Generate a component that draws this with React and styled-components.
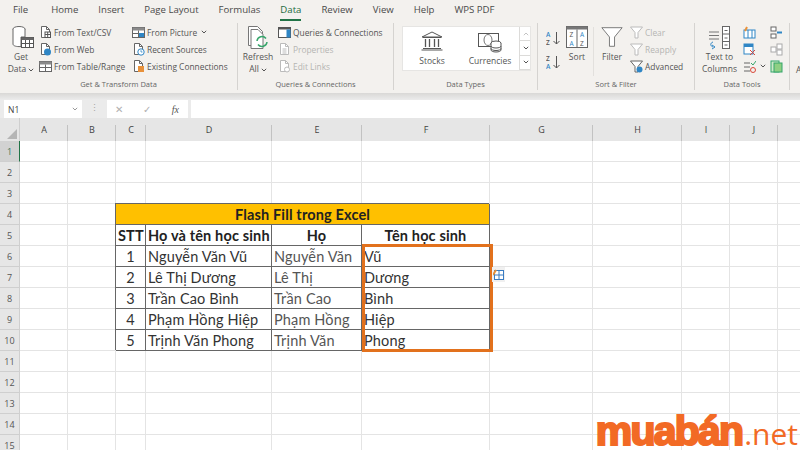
import React from "react";
import styled, { createGlobalStyle } from "styled-components";

const GlobalStyle = createGlobalStyle`
    html, body { margin: 0; padding: 0; background: #fff; }
    body { font-family: "Open Sans", "Noto Sans", sans-serif; }
`;

const Page = styled.div`
    width: 800px;
    height: 450px;
    overflow: hidden;
    position: relative;
    background: #fff;
`;

/* ---------- tabs + ribbon ---------- */

const TabBar = styled.div`
    height: 21px;
    display: flex;
    gap: 20px;
    padding-left: 13px;
    background: #f3f1ee;
`;

const Tab = styled.div`
    height: 19px;
    line-height: 20px;
    font-size: 9.6px;
    color: #4a4a4a;
    white-space: nowrap;
    &:first-child { margin-right: 3px; }
    ${p => p.$active && `
        color: #1d6b40;
        border-bottom: 2px solid #217346;
    `}
`;

const Ribbon = styled.div`
    height: 72px;
    display: flex;
    background: #f3f1ee;
`;

const ShadowStrip = styled.div`
    height: 7px;
    background: linear-gradient(#d9d8d6, #ececec);
`;

const Group = styled.div`
    width: ${p => p.$width}px;
    box-sizing: border-box;
    flex: none;
    display: flex;
    flex-direction: column;
    align-items: stretch;
    margin: 2px 0 3px;
    border-right: 1px solid #d5d3d0;
`;

const GroupBody = styled.div`
    flex: 1;
    display: flex;
    padding-left: ${p => p.$pad || 0}px;
    gap: ${p => p.$gap || 0}px;
`;

const GroupLabel = styled.div`
    height: 12px;
    line-height: 12px;
    text-align: center;
    font-size: 7.5px;
    color: #666;
    white-space: nowrap;
`;

const BigButton = styled.div`
    width: ${p => p.$width}px;
    flex: none;
    display: flex;
    flex-direction: column;
    align-items: center;
    padding-top: ${p => p.$top ?? 0}px;
    text-align: center;
    font-size: 8.5px;
    line-height: 12px;
    color: #555;
    white-space: nowrap;
    & > svg { display: block; margin-bottom: ${p => p.$iconGap ?? 2}px; }
`;

const SmallColumn = styled.div`
    display: flex;
    flex-direction: column;
    padding-top: ${p => p.$top ?? 1}px;
    gap: ${p => p.$gap ?? 1}px;
    width: ${p => (p.$width ? p.$width + "px" : "auto")};
    margin-left: ${p => p.$left ?? 0}px;
    flex: none;
`;

const SmallButton = styled.div`
    height: 16px;
    display: flex;
    align-items: center;
    gap: 2px;
    font-size: 8.4px;
    color: ${p => (p.$off ? "#b5b5b3" : "#555")};
    white-space: nowrap;
    svg { flex: none; display: block; }
`;

const InnerDivider = styled.div`
    width: 1px;
    flex: none;
    margin: 4px 0 2px;
    background: #e2e0dd;
`;

const Gallery = styled.div`
    width: 129px;
    height: 45px;
    margin: 3px 0 0 8px;
    display: flex;
    background: #fff;
    border: 1px solid #e6e5e3;
    box-sizing: border-box;
`;

const GalleryItem = styled(BigButton)`
    width: 58px;
    padding-top: 4px;
    font-size: 8.5px;
`;

const GalleryArrows = styled.div`
    margin-left: auto;
    width: 11px;
    display: flex;
    flex-direction: column;
    border-left: 1px solid #dcdbd9;
`;

const GalleryArrow = styled.div`
    flex: 1;
    display: flex;
    align-items: center;
    justify-content: center;
    border-bottom: 1px solid #dcdbd9;
`;

const CutOffLabel = styled.div`
    padding: 43px 0 0 6px;
    font-size: 8.5px;
    line-height: 12px;
    color: #555;
`;

const Chevron = ({ up, color = "#555" }) => (
    <svg width="6" height="4" viewBox="0 0 6 4" style={{ display: "inline-block", marginLeft: 2 }}>
        <path d={up ? "M.8 3.200 3 1l2.200 2.200" : "M.8.8 3 3 5.200.8"} fill="none" stroke={color} />
    </svg>
);

/* ---------- icons ---------- */

const Doc = ({ kind, off }) => {
    const line = off ? "#bbb" : "#666";
    return (
        <svg width="13" height="14" viewBox="0 0 13 14">
            <path d="M2.500 1.500h5l3 3v8h-8z" fill="#fff" stroke={line} />
            <path d="M7.500 1.500v3h3" fill="none" stroke={line} />
            {kind === "text" && <rect x="6" y="7" width="5.500" height="5.500" fill="#fff" stroke="#555" />}
            {kind === "text" && <path d="M6 9.500h5.500M8.700 7v5.500" stroke="#555" />}
            {kind === "web" && <circle cx="8.500" cy="10" r="3.500" fill="#2f86c5" />}
            {kind === "recent" && <circle cx="9" cy="10" r="3.200" fill="#fff" stroke="#2f86c5" />}
            {kind === "recent" && <path d="M9 8.200V10h1.500" fill="none" stroke="#2f86c5" strokeWidth=".8" />}
            {kind === "existing" && <rect x="6" y="7" width="6" height="6" fill="#e8913a" />}
            {kind === "props" && <path d="M4.500 7h4M4.500 9h4M4.500 11h4" stroke={line} />}
            {kind === "links" && <circle cx="9" cy="10.500" r="2.500" fill="#fff" stroke={line} />}
        </svg>
    );
};

const TableMini = ({ blue }) => (
    <svg width="13" height="13" viewBox="0 0 13 13">
        <rect x=".5" y="1.500" width="12" height="10" fill="#fff" stroke="#666" />
        <rect x=".5" y="1.500" width="12" height="3" fill="#8a8a8a" />
        <path d="M.5 7.500h12M6.500 4.500v7" stroke="#666" />
        {blue && <rect x="7" y="7" width="5" height="4" fill="#2f86c5" />}
    </svg>
);

const GetDataIcon = () => (
    <svg width="26" height="26" viewBox="0 0 26 26">
        <ellipse cx="11" cy="4" rx="6" ry="2.500" fill="#fff" stroke="#666" />
        <path d="M5 4v15c0 1.600 2.500 2.600 6 2.600h2V12h4V4" fill="#fff" stroke="#666" />
        <rect x="13.500" y="12.500" width="12" height="10" fill="#fff" stroke="#555" />
        <rect x="13.500" y="12.500" width="12" height="2.500" fill="#666" />
        <path d="M13.500 18.500h12M17.500 15v7.500M21.500 15v7.500" stroke="#555" />
    </svg>
);

const RefreshIcon = () => (
    <svg width="24" height="26" viewBox="0 0 24 26">
        <path d="M2.500 1.500h9l5 5v14h-14z" fill="#fff" stroke="#777" />
        <path d="M5 4.500h7l5 5v14H5z" fill="#fff" stroke="#777" />
        <path d="M11 16a5 5 0 0 1 9-2.500M21 17a5 5 0 0 1-9 2.500" fill="none" stroke="#35a56a" strokeWidth="1.500" />
    </svg>
);

const QueriesIcon = () => (
    <svg width="13" height="13" viewBox="0 0 13 13">
        <rect x=".5" y="1.500" width="12" height="10" fill="#fff" stroke="#555" />
        <rect x=".5" y="1.500" width="12" height="2" fill="#555" />
        <rect x="8.500" y="3.500" width="4" height="8" fill="#2f86c5" />
    </svg>
);

const BankIcon = () => (
    <svg width="24" height="20" viewBox="0 0 24 20">
        <path d="M12 1 2 6h20z" fill="none" stroke="#555" />
        <path d="M3 6.500h18M3 17.500h18M1.500 19h21" stroke="#555" />
        <path d="M5.500 8v8M9.500 8v8M14.500 8v8M18.500 8v8" stroke="#555" strokeWidth="1.300" />
    </svg>
);

const MoneyIcon = () => (
    <svg width="26" height="22" viewBox="0 0 26 22">
        <rect x="1.500" y="2.500" width="20" height="13" fill="#fff" stroke="#555" />
        <ellipse cx="11" cy="9" rx="4" ry="5.500" fill="none" stroke="#777" />
        <ellipse cx="19" cy="12" rx="5" ry="2" fill="#fff" stroke="#555" />
        <path d="M14 12v7c0 1 2 2 5 2s5-1 5-2v-7M14 15c0 1 2 2 5 2s5-1 5-2M14 17.500c0 1 2 2 5 2s5-1 5-2" fill="#fff" stroke="#555" />
    </svg>
);

const SortAsc = ({ flip }) => (
    <svg width="15" height="15" viewBox="0 0 15 15">
        <text x="0" y="6" fontSize="6.500" fontWeight="600" fontFamily="Open Sans" fill={flip ? "#555" : "#2f86c5"}>{flip ? "Z" : "A"}</text>
        <text x="0" y="14" fontSize="6.500" fontWeight="600" fontFamily="Open Sans" fill={flip ? "#2f86c5" : "#555"}>{flip ? "A" : "Z"}</text>
        <path d="M10.500 1v12M7.500 10l3 3 3-3" fill="none" stroke="#555" />
    </svg>
);

const SortIcon = () => (
    <svg width="22" height="22" viewBox="0 0 22 22">
        <rect x=".5" y=".5" width="21" height="21" fill="#fff" stroke="#666" />
        <rect x=".5" y=".5" width="21" height="3" fill="#777" />
        <path d="M11 3.500v18" stroke="#666" />
        <text x="3.500" y="11" fontSize="6.500" fontFamily="Open Sans" fill="#555">Z</text>
        <text x="3.500" y="20" fontSize="6.500" fontFamily="Open Sans" fill="#2f86c5">A</text>
        <text x="14" y="11" fontSize="6.500" fontFamily="Open Sans" fill="#2f86c5">A</text>
        <text x="14" y="20" fontSize="6.500" fontFamily="Open Sans" fill="#555">Z</text>
    </svg>
);

const Funnel = ({ size = 13, color = "#666", badge }) => (
    <svg width={size} height={size} viewBox="0 0 13 13">
        <path d="M.5 1h12L8 6.500V12L5 12V6.500z" fill="#fff" stroke={color} strokeWidth={size > 20 ? 0.5 : 1} />
        {badge && <circle cx="9.500" cy="9.500" r="3" fill={badge} />}
    </svg>
);

const TextToColumnsIcon = () => (
    <svg width="26" height="24" viewBox="0 0 26 24">
        <path d="M2 6h10M2 9.500h10M2 13h10" stroke="#777" />
        <rect x="15.500" y=".5" width="7" height="22" fill="#fff" stroke="#666" />
        <path d="M15.500 8h7M15.500 15.500h7M17.500 4.500h3M17.500 12h3M17.500 19h3" stroke="#666" />
        <path d="M6 16c-3 1-3 4 0 5M5 23l3-2-3-2" fill="none" stroke="#2f86c5" />
    </svg>
);

const Tool = ({ children }) => (
    <svg width="13" height="13" viewBox="0 0 13 13">{children}</svg>
);

/* ---------- formula bar ---------- */

const FormulaBar = styled.div`
    height: 18px;
    display: flex;
    align-items: stretch;
    background: #ebebeb;
    padding-left: 4px;
`;

const NameBox = styled.div`
    width: 70px;
    padding: 0 4px;
    display: flex;
    align-items: center;
    justify-content: space-between;
    background: #fff;
    font-size: 8.500px;
    color: #444;
`;

const Dots = styled.div`
    width: 25px;
    text-align: center;
    line-height: 16px;
    font-size: 9px;
    color: #a5a5a5;
`;

const FxBox = styled.div`
    width: 81px;
    display: flex;
    align-items: center;
    justify-content: space-between;
    padding: 0 9px 0 8px;
    box-sizing: border-box;
    background: #fff;
    color: #b0b0b0;
    font-size: 10px;
`;

const FxMark = styled.span`
    font-family: "Liberation Serif", serif;
    font-style: italic;
    color: #555;
`;

const FormulaInput = styled.div`
    flex: 1;
    margin-left: 3px;
    background: #fff;
`;

/* ---------- sheet ---------- */

const Sheet = styled.div`
    position: relative;
    display: grid;
    grid-template-columns: 20px 48px 48px 30px 126px 90px 128px 103px 89px 48px 48px 60px;
    grid-auto-rows: 21px;
    grid-template-rows: 23px;
`;

const Corner = styled.div`
    background: #e6e6e6;
    border-right: 1px solid #cfcfcf;
    position: relative;
    &::after {
        content: "";
        position: absolute;
        right: 2px;
        bottom: 2px;
        border-style: solid;
        border-width: 0 0 10px 10px;
        border-color: transparent transparent #b5b5b5 transparent;
    }
`;

const ColHead = styled.div`
    background: linear-gradient(#c2c2c2, #c2c2c2) right bottom / 1px 16px no-repeat, #e6e6e6;
    display: flex;
    align-items: center;
    justify-content: center;
    font-size: 9px;
    color: #444;
`;

const RowHead = styled.div`
    display: flex;
    align-items: center;
    justify-content: center;
    padding-top: 1px;
    box-sizing: border-box;
    background: ${p => (p.$active ? "#d2d2d2" : "#e6e6e6")};
    border-bottom: 1px solid #cfcfcf;
    border-right: ${p => (p.$active ? "1px solid #217346" : "1px solid #cfcfcf")};
    font-size: 9px;
    color: ${p => (p.$active ? "#3d7a5c" : "#555")};
`;

const Cell = styled.div`
    box-sizing: border-box;
    min-width: 0;
    border-right: 1px solid #e4e4e4;
    border-bottom: 1px solid #e4e4e4;
    padding: 0 2px;
    line-height: 21px;
    white-space: nowrap;
    font-family: Lato, "Liberation Sans", sans-serif;
    font-size: 14.500px;
    letter-spacing: 0.15px;
    color: ${p => p.$color || "#333"};
    text-align: ${p => p.$align || "left"};
    font-weight: ${p => (p.$bold ? 700 : 400)};
    ${p => p.$table && `
        border-color: #666;
        box-shadow: -1px -1px 0 #666;
    `}
    ${p => p.$fill && `background: ${p.$fill};`}
`;

const TitleCell = styled(Cell)`
    grid-column: span 4;
`;

const Highlight = styled.div`
    position: absolute;
    left: 362px;
    top: 126px;
    width: 131px;
    height: 108px;
    box-sizing: border-box;
    border: 3px solid #e2711d;
    pointer-events: none;
`;

const FillOptions = styled.div`
    position: absolute;
    left: 492px;
    top: 149px;
    width: 13px;
    height: 15px;
    background: #f0f0f0;
    display: flex;
    align-items: center;
    justify-content: center;
`;

const Logo = styled.div`
    position: absolute;
    right: 2px;
    bottom: -4px;
    display: flex;
    align-items: baseline;
    color: #f26a25;
    line-height: 40px;
    white-space: nowrap;
`;

const LogoMain = styled.span`
    font-family: "Liberation Sans", sans-serif;
    font-weight: 700;
    font-size: 41px;
    letter-spacing: -1.800px;
    -webkit-text-stroke: 2.200px #f26a25;
`;

const LogoNet = styled.span`
    font-family: "Open Sans", sans-serif;
    font-size: 30px;
    font-weight: 400;
    margin-left: 2px;
`;

// K runs off the right edge, its letter is out of the picture
const columns = ["A", "B", "C", "D", "E", "F", "G", "H", "I", "J", ""];

const students = [
    ["1", "Nguyễn Văn Vũ", "Nguyễn Văn", "Vũ"],
    ["2", "Lê Thị Dương", "Lê Thị", "Dương"],
    ["3", "Trần Cao Bình", "Trần Cao", "Bình"],
    ["4", "Phạm Hồng Hiệp", "Phạm Hồng", "Hiệp"],
    ["5", "Trịnh Văn Phong", "Trịnh Văn", "Phong"],
];

const blank = (n, key) => Array.from({ length: n }, (_, i) => <Cell key={key + i} />);

const SheetRow = ({ row }) => {
    const head = <RowHead $active={row === 1}>{row}</RowHead>;
    if (row === 4) {
        return (
            <>
                {head}
                {blank(2, "l")}
                <TitleCell $table $bold $align="center" $fill="#ffc000" $color="#222">Flash Fill trong Excel</TitleCell>
                {blank(5, "r")}
            </>
        );
    }
    if (row === 5) {
        return (
            <>
                {head}
                {blank(2, "l")}
                <Cell $table $bold $align="center" $color="#222">STT</Cell>
                <Cell $table $bold $color="#222">Họ và tên học sinh</Cell>
                <Cell $table $bold $align="center" $color="#222">Họ</Cell>
                <Cell $table $bold $align="center" $color="#222">Tên học sinh</Cell>
                {blank(5, "r")}
            </>
        );
    }
    const student = students[row - 6];
    if (student) {
        return (
            <>
                {head}
                {blank(2, "l")}
                <Cell $table $align="center">{student[0]}</Cell>
                <Cell $table>{student[1]}</Cell>
                <Cell $table $color="#555">{student[2]}</Cell>
                <Cell $table>{student[3]}</Cell>
                {blank(5, "r")}
            </>
        );
    }
    return (
        <>
            {head}
            {blank(11, "c")}
        </>
    );
};

export default function App() {
    return (
        <Page>
            <GlobalStyle />
            <TabBar>
                {["File", "Home", "Insert", "Page Layout", "Formulas"].map(t => <Tab key={t}>{t}</Tab>)}
                <Tab $active>Data</Tab>
                {["Review", "View", "Help", "WPS PDF"].map(t => <Tab key={t}>{t}</Tab>)}
            </TabBar>

            <Ribbon>
                <Group $width={238}>
                    <GroupBody $pad={8}>
                        <BigButton $width={26} $top={2} $iconGap={0}>
                            <GetDataIcon />
                            Get
                            <span>Data<Chevron /></span>
                        </BigButton>
                        <SmallColumn $width={93} $left={5}>
                            <SmallButton><Doc kind="text" />From Text/CSV</SmallButton>
                            <SmallButton><Doc kind="web" />From Web</SmallButton>
                            <SmallButton><TableMini />From Table/Range</SmallButton>
                        </SmallColumn>
                        <SmallColumn>
                            <SmallButton><TableMini blue />From Picture <Chevron /></SmallButton>
                            <SmallButton><Doc kind="recent" />Recent Sources</SmallButton>
                            <SmallButton><Doc kind="existing" />Existing Connections</SmallButton>
                        </SmallColumn>
                    </GroupBody>
                    <GroupLabel>Get &amp; Transform Data</GroupLabel>
                </Group>

                <Group $width={156}>
                    <GroupBody $pad={6} $gap={6}>
                        <BigButton $width={28} $top={2} $iconGap={0}>
                            <RefreshIcon />
                            Refresh
                            <span>All<Chevron /></span>
                        </BigButton>
                        <SmallColumn>
                            <SmallButton><QueriesIcon />Queries &amp; Connections</SmallButton>
                            <SmallButton $off><Doc kind="props" off />Properties</SmallButton>
                            <SmallButton $off><Doc kind="links" off />Edit Links</SmallButton>
                        </SmallColumn>
                    </GroupBody>
                    <GroupLabel>Queries &amp; Connections</GroupLabel>
                </Group>

                <Group $width={144}>
                    <GroupBody>
                        <Gallery>
                            <GalleryItem $iconGap={4}><BankIcon />Stocks</GalleryItem>
                            <GalleryItem><MoneyIcon />Currencies</GalleryItem>
                            <GalleryArrows>
                                <GalleryArrow><Chevron up color="#c4c4c4" /></GalleryArrow>
                                <GalleryArrow><Chevron /></GalleryArrow>
                                <GalleryArrow><Chevron /></GalleryArrow>
                            </GalleryArrows>
                        </Gallery>
                    </GroupBody>
                    <GroupLabel>Data Types</GroupLabel>
                </Group>

                <Group $width={157}>
                    <GroupBody $pad={8} $gap={5}>
                        <SmallColumn $top={8} $gap={9}>
                            <SortAsc />
                            <SortAsc flip />
                        </SmallColumn>
                        <BigButton $width={22} $top={3} $iconGap={3}>
                            <SortIcon />
                            Sort
                        </BigButton>
                        <InnerDivider />
                        <BigButton $width={26} $top={3} $iconGap={3}>
                            <Funnel size={22} />
                            Filter
                        </BigButton>
                        <SmallColumn>
                            <SmallButton $off><Funnel color="#bbb" />Clear</SmallButton>
                            <SmallButton $off><Funnel color="#bbb" />Reapply</SmallButton>
                            <SmallButton><Funnel badge="#2f86c5" />Advanced</SmallButton>
                        </SmallColumn>
                    </GroupBody>
                    <GroupLabel>Sort &amp; Filter</GroupLabel>
                </Group>

                <Group $width={95}>
                    <GroupBody $pad={6} $gap={5}>
                        <BigButton $width={37} $top={3} $iconGap={1}>
                            <TextToColumnsIcon />
                            Text to
                            <span>Columns</span>
                        </BigButton>
                        <SmallColumn $width={22}>
                            <SmallButton>
                                <Tool><rect x="1" y="4" width="11" height="8" fill="#fff" stroke="#2f86c5" /><path d="M5 4v8M9 4v8" stroke="#2f86c5" /><path d="M4 1 2 5" stroke="#e8913a" strokeWidth="2" /></Tool>
                            </SmallButton>
                            <SmallButton>
                                <Tool><rect x="1" y="1" width="9" height="10" fill="#fff" stroke="#2f86c5" /><rect x="1" y="1" width="9" height="3" fill="#2f86c5" /><path d="m7 7 5 5m0-5-5 5" stroke="#d9473a" /></Tool>
                            </SmallButton>
                            <SmallButton>
                                <Tool><path d="M1 3h6M1 7h6M1 11h6" stroke="#666" /><path d="m8 3 2 2 3-4" fill="none" stroke="#35a56a" /><circle cx="10" cy="10" r="2.500" fill="none" stroke="#d9473a" /></Tool>
                                <Chevron />
                            </SmallButton>
                        </SmallColumn>
                        <SmallColumn $width={14}>
                            <SmallButton>
                                <Tool><rect x="1" y="1" width="5" height="4" fill="#fff" stroke="#666" /><rect x="1" y="8" width="5" height="4" fill="#fff" stroke="#666" /><path d="M7 6.500h5" stroke="#2f86c5" strokeWidth="2" /></Tool>
                            </SmallButton>
                            <SmallButton>
                                <Tool><rect x="1" y="4" width="5" height="5" fill="#fff" stroke="#aaa" /><rect x="7" y="1" width="5" height="5" fill="#fff" stroke="#aaa" /><rect x="7" y="7" width="5" height="5" fill="#fff" stroke="#aaa" /></Tool>
                            </SmallButton>
                            <SmallButton>
                                <Tool><rect x="1" y="1" width="8" height="11" fill="#cfe8c9" stroke="#35a56a" /><rect x="4" y="3" width="8" height="9" fill="#8fcf83" stroke="#35a56a" /></Tool>
                            </SmallButton>
                        </SmallColumn>
                    </GroupBody>
                    <GroupLabel>Data Tools</GroupLabel>
                </Group>
                <CutOffLabel>A</CutOffLabel>
            </Ribbon>
            <ShadowStrip />

            <FormulaBar>
                <NameBox>N1 <Chevron color="#999" /></NameBox>
                <Dots>⋮</Dots>
                <FxBox>
                    <span>✕</span>
                    <span>✓</span>
                    <FxMark>fx</FxMark>
                </FxBox>
                <FormulaInput />
            </FormulaBar>

            <Sheet>
                <Corner />
                {columns.map((c, i) => <ColHead key={i}>{c}</ColHead>)}
                {Array.from({ length: 15 }, (_, i) => <SheetRow key={i} row={i + 1} />)}
                <Highlight />
                <FillOptions>
                    <svg width="12" height="12" viewBox="0 0 12 12">
                        <rect x="1.500" y="1.500" width="9" height="9" fill="#fff" stroke="#3a7cc2" />
                        <path d="M1.500 6h9M6 1.500v9" stroke="#3a7cc2" />
                        <path d="M0 6 3 1" stroke="#e8913a" strokeWidth="2" />
                    </svg>
                </FillOptions>
            </Sheet>

            <Logo>
                <LogoMain>muabán</LogoMain>
                <LogoNet>.net</LogoNet>
            </Logo>
        </Page>
    );
}
